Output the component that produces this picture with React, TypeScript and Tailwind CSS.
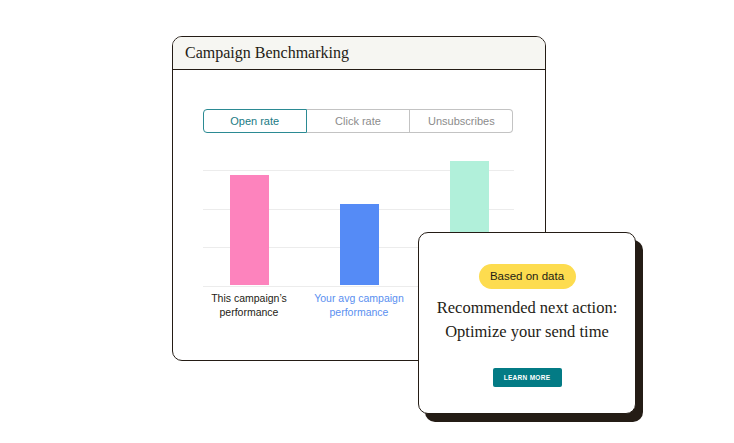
const SANS = 'font-["Liberation_Sans",Arial,sans-serif]'
const SERIF = 'font-["Liberation_Serif","Times_New_Roman",serif]'

const TABS = ['Open rate', 'Click rate', 'Unsubscribes']

const BARS = [
  { color: 'bg-[#fd83bd]', height: 110, label: ['This campaign\u2019s', 'performance'], text: 'text-[#241c15]' },
  { color: 'bg-[#558bf6]', height: 81, label: ['Your avg campaign', 'performance'], text: 'text-[#5a8ff0]' },
  { color: 'bg-[#b1f0da]', height: 124, label: [], text: '' },
]

function Tabs() {
  return (
    <div className={`flex h-[24px] w-[311px] ${SANS} text-[11px]`}>
      {TABS.map((t, i) => (
        <div
          key={t}
          className={
            i === 0
              ? 'flex flex-1 items-center justify-center rounded-l-[4px] border border-[#2b8a93] text-[#1a7b84]'
              : i === 1
                ? 'flex flex-1 items-center justify-center border-y border-r border-[#c3c3c3] text-[#8c8c8c]'
                : 'flex flex-1 items-center justify-center rounded-r-[4px] border-y border-r border-[#c3c3c3] text-[#8c8c8c]'
          }
        >
          {t}
        </div>
      ))}
    </div>
  )
}

function Chart() {
  return (
    <div className="w-[311px]">
      <div className="relative h-[127px]">
        <div className="flex flex-col pt-[11px]">
          <div className="h-[38.5px] border-t border-[#ececec]" />
          <div className="h-[38.5px] border-t border-[#ececec]" />
          <div className="h-[38.5px] border-t border-[#ececec]" />
          <div className="border-t border-[#ececec]" />
        </div>
        <div className="absolute inset-0 flex items-end gap-[71px] pb-px pl-[27px]">
          {BARS.map((b, i) => (
            <div key={i} className={`w-[39px] ${b.color}`} style={{ height: b.height }} />
          ))}
        </div>
      </div>
      <div className={`ml-[-8.5px] flex pt-[5px] ${SANS} text-[10.5px] leading-[14px]`}>
        {BARS.map((b, i) => (
          <div key={i} className={`w-[110px] shrink-0 text-center ${b.text}`}>
            {b.label.map((l) => (
              <div key={l}>{l}</div>
            ))}
          </div>
        ))}
      </div>
    </div>
  )
}

function ActionCard() {
  return (
    <div className="absolute left-[418px] top-[232px] flex h-[182px] w-[218px] flex-col items-center rounded-[10px] border-[1.5px] border-[#241c15] bg-white pt-[31px] shadow-[7px_8px_0_0_#241c15]">
      <div className={`flex h-[25px] w-[97px] items-center justify-center rounded-full bg-[#fddc4f] ${SANS} text-[11.5px] text-[#241c15]`}>
        Based on data
      </div>
      <div className={`mt-[7px] text-center ${SERIF} text-[16.5px] leading-[24px] text-[#241c15]`}>
        <div>Recommended next action:</div>
        <div>Optimize your send time</div>
      </div>
      <div className={`mt-[24px] flex h-[19px] w-[69px] items-center justify-center rounded-[2px] bg-[#037b85] ${SANS} text-[6.5px] font-bold tracking-[0.3px] text-white`}>
        LEARN MORE
      </div>
    </div>
  )
}

export default function App() {
  return (
    <div className="relative h-[443px] w-[734px] overflow-hidden bg-white pl-[172px] pt-[36px]">
      <div className="flex h-[325px] w-[374px] flex-col overflow-hidden rounded-[10px] border-[1.5px] border-[#241c15] bg-white">
        <div className={`flex h-[33px] items-center border-b-[1.5px] border-[#241c15] bg-[#f6f6f2] pl-[12px] ${SERIF} text-[16px] text-[#241c15]`}>
          Campaign Benchmarking
        </div>
        <div className="flex flex-col pl-[29.5px] pt-[39px]">
          <Tabs />
          <div className="mt-[26px]">
            <Chart />
          </div>
        </div>
      </div>
      <ActionCard />
    </div>
  )
}
